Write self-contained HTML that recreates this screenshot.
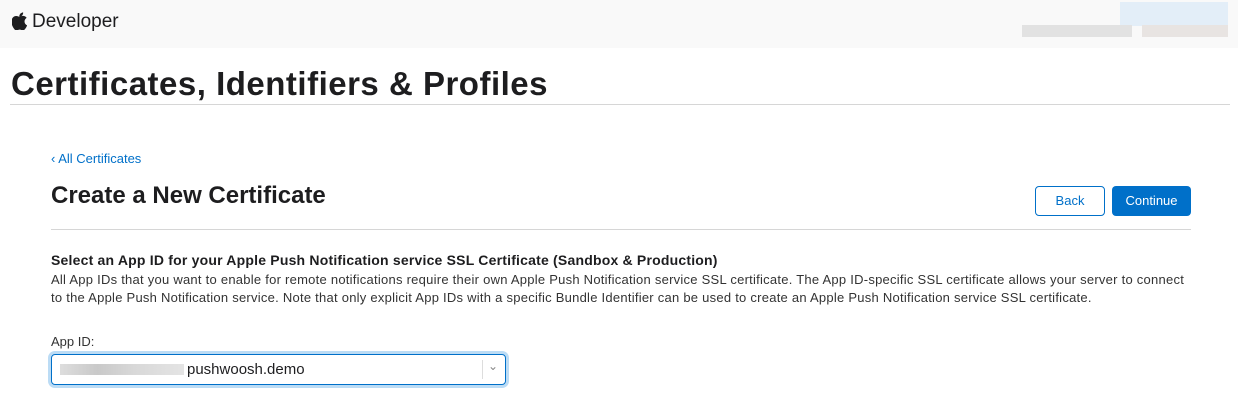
<!DOCTYPE html>
<html><head><meta charset="utf-8"><style>
body{margin:0;width:1238px;height:418px;background:#fff;font-family:"Liberation Sans",sans-serif;color:#1d1d1f;position:relative;overflow:hidden}
.a{position:absolute}
</style></head><body>
<div class="a" style="left:0;top:0;width:1238px;height:48px;background:#f9f9f9"></div>
<svg class="a" style="left:12px;top:12px" width="15" height="18" viewBox="0 0 170 200"><path fill="#1d1d1f" d="M142 106c0-28 23-41 24-42-13-19-33-22-40-22-17-2-33 10-42 10-9 0-22-10-36-9C29 43 12 54 3 70c-19 33-5 82 14 109 9 13 20 28 34 28 14-1 19-9 36-9s21 9 36 9c15 0 24-13 33-27 10-15 15-30 15-31-1 0-29-11-29-43z"/><path fill="#1d1d1f" d="M115 25c8-9 13-22 11-35-11 1-24 7-32 16-7 8-13 21-11 34 12 1 24-6 32-15z" transform="translate(0,12)"/></svg>
<div class="a" style="left:32px;top:11px;font-size:19px;color:#1d1d1f">Developer</div>
<div class="a" style="left:1120px;top:2px;width:108px;height:24px;background:#e3eef8"></div>
<div class="a" style="left:1022px;top:25px;width:110px;height:12px;background:#e2e2e2"></div>
<div class="a" style="left:1142px;top:25px;width:86px;height:12px;background:#e8e4e2"></div>
<div class="a" style="left:11px;top:65px;font-size:33px;font-weight:bold;color:#1d1d1f;letter-spacing:0.5px">Certificates, Identifiers &amp; Profiles</div>
<div class="a" style="left:10px;top:104px;width:1220px;height:1px;background:#d6d6d6"></div>
<div class="a" style="left:51px;top:151px;font-size:13px;color:#0070c9">‹ All Certificates</div>
<div class="a" style="left:51px;top:182px;font-size:24px;font-weight:bold">Create a New Certificate</div>
<div class="a" style="left:1035px;top:186px;width:68px;height:28px;border:1px solid #0070c9;border-radius:4px;color:#0070c9;font-size:13px;text-align:center;line-height:28px">Back</div>
<div class="a" style="left:1112px;top:186px;width:79px;height:30px;background:#0070c9;border-radius:4px;color:#fff;font-size:13px;text-align:center;line-height:30px">Continue</div>
<div class="a" style="left:51px;top:229px;width:1140px;height:1px;background:#d6d6d6"></div>
<div class="a" style="left:51px;top:252px;font-size:14px;font-weight:bold;letter-spacing:0.2px">Select an App ID for your Apple Push Notification service SSL Certificate (Sandbox &amp; Production)</div>
<div class="a" style="left:51px;top:271px;width:1145px;font-size:13px;letter-spacing:0.25px;line-height:18px;color:#333">All App IDs that you want to enable for remote notifications require their own Apple Push Notification service SSL certificate. The App ID-specific SSL certificate allows your server to connect to the Apple Push Notification service. Note that only explicit App IDs with a specific Bundle Identifier can be used to create an Apple Push Notification service SSL certificate.</div>
<div class="a" style="left:51px;top:334px;font-size:13px;color:#333">App ID:</div>
<div class="a" style="left:51px;top:354px;width:453px;height:29px;border:1px solid #0070c9;border-radius:4px;box-shadow:0 0 0 3px #bcdcf5"></div>
<div class="a" style="left:60px;top:364px;width:124px;height:11px;background:linear-gradient(90deg,#ddd,#c9c9c9 30%,#d8d8d8 60%,#e4e4e4)"></div>
<div class="a" style="left:187px;top:361px;font-size:15px;color:#1d1d1f">pushwoosh.demo</div>
<div class="a" style="left:482px;top:360px;width:1px;height:19px;background:#ddd"></div>
<div class="a" style="left:488px;top:359px;font-size:12px;color:#888">⌄</div>
</body></html>
